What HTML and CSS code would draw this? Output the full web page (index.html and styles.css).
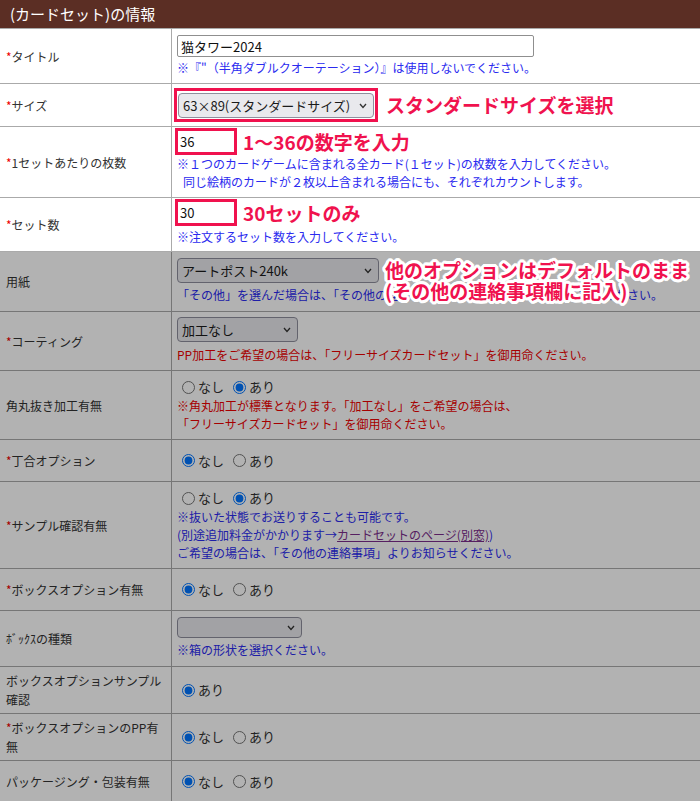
FILE: index.html
```html
<!DOCTYPE html>
<html lang="ja">
<head>
<meta charset="utf-8">
<title>(カードセット)の情報</title>
<link rel="stylesheet" href="styles.css">
</head>
<body>
<div class="header">(カードセット)の情報</div>
<div class="form">
  <div class="row">
    <div class="label"><span><span class="req">*</span>タイトル</span></div>
    <div class="value">
      <input class="text" type="text" value="猫タワー2024">
      <div class="note blue mt2">※『"（半角ダブルクオーテーション）』は使用しないでください。</div>
    </div>
  </div>
  <div class="row">
    <div class="label"><span><span class="req">*</span>サイズ</span></div>
    <div class="value pad-size">
      <div class="inline">
        <span class="redbox"><span class="sel"><select class="w196"><option>63×89(スタンダードサイズ)</option></select><svg class="chev" viewBox="0 0 8 6"><polyline points="1,1 4,4.5 7,1"/></svg></span></span>
        <span class="anno anno-wide">スタンダードサイズを選択</span>
      </div>
    </div>
  </div>
  <div class="row">
    <div class="label"><span><span class="req">*</span>1セットあたりの枚数</span></div>
    <div class="value pad-qty">
      <div class="inline">
        <input class="qty" type="text" value="36">
        <span class="anno">1～36の数字を入力</span>
      </div>
      <div class="note blue">※１つのカードゲームに含まれる全カード(１セット)の枚数を入力してください。<br><span class="indent">同じ絵柄のカードが２枚以上含まれる場合にも、それぞれカウントします。</span></div>
    </div>
  </div>
  <div class="row">
    <div class="label"><span><span class="req">*</span>セット数</span></div>
    <div class="value pad-sets">
      <div class="inline">
        <input class="qty" type="text" value="30">
        <span class="anno">30セットのみ</span>
      </div>
      <div class="note blue mt2">※注文するセット数を入力してください。</div>
    </div>
  </div>

  <div class="dim">
    <div class="dim-anno">他のオプションはデフォルトのまま<br>(その他の連絡事項欄に記入)</div>
    <div class="row">
      <div class="label"><span>用紙</span></div>
      <div class="value pad-paper">
        <span class="sel"><select class="w202"><option>アートポスト240k</option></select><svg class="chev" viewBox="0 0 8 6"><polyline points="1,1 4,4.5 7,1"/></svg></span>
        <div class="note blue mt3">「その他」を選んだ場合は、「その他の連絡事項」に用紙の名称と厚さをご記入ください。</div>
      </div>
    </div>
    <div class="row">
      <div class="label"><span><span class="req">*</span>コーティング</span></div>
      <div class="value pad-coat">
        <span class="sel"><select class="w121"><option>加工なし</option></select><svg class="chev" viewBox="0 0 8 6"><polyline points="1,1 4,4.5 7,1"/></svg></span>
        <div class="note red mt4">PP加工をご希望の場合は、「フリーサイズカードセット」を御用命ください。</div>
      </div>
    </div>
    <div class="row">
      <div class="label"><span>角丸抜き加工有無</span></div>
      <div class="value">
        <div class="radios">
          <label><input type="radio" name="r1">なし</label>
          <label><input type="radio" name="r1" checked>あり</label>
        </div>
        <div class="note red">※角丸加工が標準となります。「加工なし」をご希望の場合は、<br>「フリーサイズカードセット」を御用命ください。</div>
      </div>
    </div>
    <div class="row">
      <div class="label"><span><span class="req">*</span>丁合オプション</span></div>
      <div class="value">
        <div class="radios">
          <label><input type="radio" name="r2" checked>なし</label>
          <label><input type="radio" name="r2">あり</label>
        </div>
      </div>
    </div>
    <div class="row">
      <div class="label"><span><span class="req">*</span>サンプル確認有無</span></div>
      <div class="value">
        <div class="radios">
          <label><input type="radio" name="r3">なし</label>
          <label><input type="radio" name="r3" checked>あり</label>
        </div>
        <div class="note blue">※抜いた状態でお送りすることも可能です。<br>(別途追加料金がかかります→<a href="#">カードセットのページ(別窓)</a>)<br>ご希望の場合は、「その他の連絡事項」よりお知らせください。</div>
      </div>
    </div>
    <div class="row">
      <div class="label"><span><span class="req">*</span>ボックスオプション有無</span></div>
      <div class="value">
        <div class="radios">
          <label><input type="radio" name="r4" checked>なし</label>
          <label><input type="radio" name="r4">あり</label>
        </div>
      </div>
    </div>
    <div class="row">
      <div class="label"><span>ﾎﾞｯｸｽの種類</span></div>
      <div class="value pad-box">
        <span class="sel"><select class="w125 empty"><option></option></select><svg class="chev" viewBox="0 0 8 6"><polyline points="1,1 4,4.5 7,1"/></svg></span>
        <div class="note blue mt3">※箱の形状を選択ください。</div>
      </div>
    </div>
    <div class="row">
      <div class="label"><span>ボックスオプションサンプル確認</span></div>
      <div class="value">
        <div class="radios">
          <label><input type="radio" name="r5" checked>あり</label>
        </div>
      </div>
    </div>
    <div class="row">
      <div class="label"><span><span class="req">*</span>ボックスオプションのPP有無</span></div>
      <div class="value">
        <div class="radios">
          <label><input type="radio" name="r6" checked>なし</label>
          <label><input type="radio" name="r6">あり</label>
        </div>
      </div>
    </div>
    <div class="row">
      <div class="label"><span>パッケージング・包装有無</span></div>
      <div class="value">
        <div class="radios">
          <label><input type="radio" name="r7" checked>なし</label>
          <label><input type="radio" name="r7">あり</label>
        </div>
      </div>
    </div>
  </div>
</div>
</body>
</html>
```

FILE: styles.css
```css
* { box-sizing: border-box; }

body {
  margin: 0;
  width: 700px;
  background: #fff;
  color: #333;
  font-family: "Noto Sans CJK JP", "Noto Sans", sans-serif;
}

.header {
  height: 28px;
  padding-left: 10px;
  background: #5b2e24;
  color: #fff;
  font-size: 15px;
  line-height: 28px;
}

.form {
  border-top: 1px solid #aaa;
}

.row {
  display: grid;
  grid-template-columns: 172px 1fr;
  min-height: 42px;
  border-bottom: 1px solid #aaa;
}

.label {
  display: flex;
  align-items: center;
  padding: 4px 6px;
  border-right: 1px solid #aaa;
  font-size: 12px;
  line-height: 19px;
}

.req { color: #e00; }

.value {
  display: flex;
  flex-direction: column;
  justify-content: center;
  align-items: flex-start;
  padding: 6px 5px;
  font-size: 12px;
  line-height: 18px;
}

.pad-size { padding: 4px 5px; }
.pad-qty { padding: 1px 5px 6px; }
.pad-sets { padding: 1px 5px 5px; }
.pad-paper { padding: 6px 5px 7px; }
.pad-coat { padding: 5px 5px 6px; }
.pad-box { padding: 6px 5px 7px; }

.note { white-space: nowrap; }
.blue { color: #2b2bef; }
.red { color: #ee0000; }
.mt2 { margin-top: 2px; }
.mt3 { margin-top: 3px; }
.mt4 { margin-top: 4px; }
.indent { padding-left: 6px; }

.note a {
  color: #7b2d8b;
  text-decoration: underline;
}

.text {
  width: 357px;
  height: 22px;
  padding: 0 3px;
  border: 1px solid #8f8f8f;
  border-radius: 2px;
  background: #fff;
  color: #111;
  font-family: inherit;
  font-size: 13px;
}

.inline {
  display: flex;
  align-items: center;
}

.qty {
  width: 62px;
  height: 27px;
  margin-left: -2px;
  padding: 0 2px;
  border: 3px solid #f0124e;
  background: #fff;
  color: #111;
  font-family: inherit;
  font-size: 13px;
}

.redbox {
  display: inline-flex;
  margin-left: -3px;
  padding: 2px 1px 1px 1px;
  border: 3px solid #f0124e;
}

.anno {
  margin-left: 6px;
  color: #f0124e;
  font-size: 19px;
  font-weight: 700;
  line-height: 22px;
  white-space: nowrap;
}

.anno-wide { margin-left: 8px; }

.sel {
  position: relative;
  display: inline-flex;
}

.sel select {
  -webkit-appearance: none;
  appearance: none;
  height: 25px;
  padding: 0 20px 0 4px;
  border: 1px solid #8f8f9d;
  border-radius: 4px;
  background: #e9e9ed;
  color: #1b1b1b;
  font-family: inherit;
  font-size: 13px;
}

.sel select.empty { height: 21px; }
.w196 { width: 196px; }
.w202 { width: 202px; }
.w121 { width: 121px; }
.w125 { width: 125px; }

.chev {
  position: absolute;
  right: 7px;
  top: 50%;
  width: 8px;
  height: 6px;
  margin-top: -3px;
  fill: none;
  stroke: #333;
  stroke-width: 1.3;
  pointer-events: none;
}

.radios {
  display: flex;
  align-items: center;
  height: 20px;
  font-size: 13px;
}

.radios label {
  display: inline-flex;
  align-items: center;
}

.radios label + label { margin-left: 4px; }

.radios input {
  width: 13px;
  height: 13px;
  margin: 0 3px 0 5px;
}

.dim {
  position: relative;
}

.dim .row { border-bottom-color: #aaa; }

.dim::after {
  content: "";
  position: absolute;
  inset: 0;
  z-index: 1;
  background: rgba(0, 0, 0, 0.3);
  pointer-events: none;
}

.dim-anno {
  position: absolute;
  left: 385px;
  top: 7px;
  z-index: 2;
  color: #f0124e;
  font-size: 19px;
  font-weight: 700;
  line-height: 21px;
  white-space: nowrap;
  text-shadow:
    3px 0 #fff, -3px 0 #fff, 0 3px #fff, 0 -3px #fff,
    2px 2px #fff, -2px 2px #fff, 2px -2px #fff, -2px -2px #fff,
    3px 1px #fff, -3px 1px #fff, 3px -1px #fff, -3px -1px #fff,
    1px 3px #fff, -1px 3px #fff, 1px -3px #fff, -1px -3px #fff;
}
```
